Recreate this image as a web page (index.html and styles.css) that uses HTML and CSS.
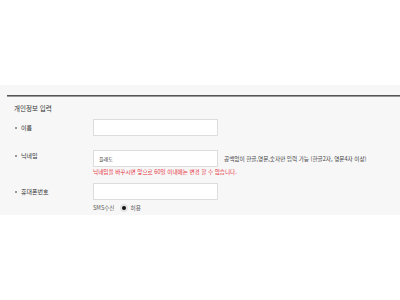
FILE: index.html
```html
<!DOCTYPE html>
<html lang="ko">
<head>
  <meta charset="utf-8">
  <title>개인정보 입력</title>
  <link rel="stylesheet" href="styles.css">
</head>
<body>
  <div class="top-space"></div>
  <div class="info-section">
    <div class="info-rule"></div>
    <h2 class="info-title">개인정보 입력</h2>
    <div class="form-row row-name">
      <label class="form-label">이름</label>
      <div class="form-field">
        <input class="form-input" type="text" value="">
      </div>
    </div>
    <div class="form-row row-nick">
      <label class="form-label">닉네임</label>
      <div class="form-field">
        <div class="field-line">
          <input class="form-input" type="text" value="플래도">
          <span class="field-help">공백없이 한글,영문,숫자만 입력 가능 (한글2자, 영문4자 이상)</span>
        </div>
        <p class="field-warn">닉네임을 바꾸시면 앞으로 60일 이내에는 변경 할 수 없습니다.</p>
      </div>
    </div>
    <div class="form-row row-phone">
      <label class="form-label">휴대폰번호</label>
      <div class="form-field">
        <input class="form-input" type="text" value="">
        <div class="sms-line">
          <span class="sms-label">SMS수신</span>
          <span class="radio-dot"></span>
          <span class="sms-value">허용</span>
        </div>
      </div>
    </div>
  </div>
</body>
</html>
```

FILE: styles.css
```css
html, body {
  margin: 0; padding: 0;
  background: #fff;
  color: #333;
  font-family: 'Noto Sans CJK KR', 'Noto Sans', sans-serif;
  width: 400px; height: 300px;
  overflow: hidden;
}
.top-space {
  height: 85px;
}
.info-section {
  background: #f7f7f7;
  padding: 10px 0 2px 0;
}
.info-rule {
  margin-left: 7px;
  height: 0;
  border-top: 1px solid #555;
  border-bottom: 1px solid #999;
}
.info-title {
  margin: 6px 0 0 14px;
  font-size: 6.5px;
  font-weight: normal;
  color: #333;
  line-height: 10px;
}
.form-row {
  display: flex;
  align-items: flex-start;
}
.row-name { margin-top: 6px; }
.row-nick { margin-top: 14px; }
.row-phone { margin-top: 7px; }
.form-label {
  width: 93px;
  box-sizing: border-box;
  padding-left: 15px;
  font-size: 6px;
  line-height: 17px;
  color: #333;
  display: flex;
  align-items: center;
}
.row-nick .form-label { line-height: 11px; }
.form-label::before {
  content: "";
  width: 2px; height: 2px;
  border-radius: 50%;
  background: #777;
  margin-right: 4px;
}
.form-field {
  display: flex;
  flex-direction: column;
}
.field-line {
  display: flex;
  align-items: center;
}
.form-input {
  width: 125px;
  height: 17px;
  box-sizing: border-box;
  border: 1px solid #ddd;
  background: #fff;
  margin: 0;
  padding: 0 5px;
  font-family: 'Noto Sans CJK KR', sans-serif;
  font-size: 5px;
  color: #333;
  outline: none;
}
.field-help {
  margin-left: 6px;
  font-size: 5.6px;
  color: #444;
}
.field-warn {
  margin: 1px 0 0 0;
  font-size: 5.6px;
  line-height: 8px;
  color: #e5323e;
}
.sms-line {
  display: flex;
  align-items: center;
  margin-top: 3px;
  height: 10px;
  font-size: 5.6px;
  color: #555;
}
.radio-dot {
  width: 4px; height: 4px;
  border-radius: 50%;
  background: #111;
  border: 2px solid #e4e4e4;
  margin: 0 3px 0 5px;
}
```
